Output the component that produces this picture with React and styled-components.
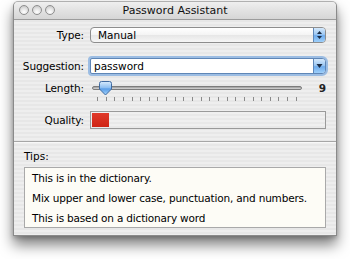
import React from "react";
import styled, { createGlobalStyle } from "styled-components";

const Global = createGlobalStyle`
  html, body { margin: 0; padding: 0; background: #ffffff; }
  body { font-family: "DejaVu Sans", "Liberation Sans", sans-serif; }
`;

const Page = styled.div`
  width: 350px;
  height: 259px;
  padding: 1px 0 0 13px;
  box-sizing: border-box;
  overflow: hidden;
`;

const Window = styled.div`
  width: 324px;
  height: 235px;
  box-sizing: border-box;
  border: 1px solid #8a8a8a;
  border-top-color: #b0b0b0;
  border-radius: 5px 5px 0 0;
  box-shadow: 0 9px 14px rgba(0, 0, 0, 0.5), 0 2px 4px rgba(0, 0, 0, 0.2);
  background: repeating-linear-gradient(
    to bottom,
    #eeeeee 0px,
    #eeeeee 2px,
    #e7e7e7 2px,
    #e7e7e7 4px
  );
  display: flex;
  flex-direction: column;
  overflow: hidden;
`;

const TitleBar = styled.div`
  height: 17px;
  flex: none;
  position: relative;
  display: flex;
  align-items: center;
  justify-content: center;
  background: linear-gradient(to bottom, #efefef 0%, #e2e2e2 50%, #d6d6d6 100%);
  border-bottom: 1px solid #9c9c9c;
  border-radius: 4px 4px 0 0;
`;

const Lights = styled.div`
  position: absolute;
  left: 5px;
  top: 3px;
  display: flex;
  gap: 3px;
`;

const Light = styled.span`
  width: 10px;
  height: 10px;
  border-radius: 50%;
  box-sizing: border-box;
  border: 1px solid #8e8e8e;
  background: radial-gradient(circle at 50% 75%, #ffffff 0%, #e6e6e6 45%, #bdbdbd 100%);
`;

const Title = styled.span`
  font-size: 11px;
  color: #111;
`;

const Form = styled.div`
  display: flex;
  flex-direction: column;
  padding: 0 10px 0 0;
`;

const Row = styled.div`
  display: flex;
  align-items: ${(p) => (p.$top ? "flex-start" : "center")};
  margin-top: ${(p) => p.$mt}px;
  height: ${(p) => p.$h}px;
`;

const Label = styled.span`
  width: 70px;
  flex: none;
  text-align: right;
  margin-right: 6px;
  font-size: 10.5px;
  letter-spacing: -0.1px;
  line-height: 16px;
  color: #000;
`;

const PopUp = styled.div`
  flex: 1;
  height: 16px;
  box-sizing: border-box;
  border: 1px solid #8d8d8d;
  border-radius: 4px;
  background: linear-gradient(to bottom, #ffffff 0%, #f4f4f4 50%, #e6e6e6 51%, #f6f6f6 100%);
  display: flex;
  align-items: center;
  overflow: hidden;
`;

const FieldText = styled.span`
  flex: 1;
  font-size: 10.5px;
  color: #000;
  padding-left: ${(p) => p.$pl}px;
  line-height: 14px;
`;

const AquaButton = styled.div`
  width: 11px;
  align-self: stretch;
  flex: none;
  background: linear-gradient(
    to bottom,
    #d4e8fb 0%,
    #9fc9f3 45%,
    #6eabec 55%,
    #9ed0fb 100%
  );
  border-left: 1px solid #5f87b8;
  display: flex;
  align-items: center;
  justify-content: center;
`;

const Combo = styled.div`
  flex: 1;
  height: 16px;
  box-sizing: border-box;
  border: 1px solid #5f86b6;
  border-radius: 2px 4px 4px 2px;
  background: #ffffff;
  box-shadow: 0 0 0 2px #9cbde3;
  display: flex;
  align-items: center;
  overflow: hidden;
`;

const SliderWrap = styled.div`
  flex: 1;
  display: flex;
  align-items: flex-start;
`;

const Slider = styled.div`
  width: 214px;
  height: 24px;
  position: relative;
`;

const Track = styled.div`
  position: absolute;
  left: 2px;
  right: 2px;
  top: 6px;
  height: 4px;
  box-sizing: border-box;
  border-radius: 2px;
  border: 1px solid #7c7c7c;
  background: linear-gradient(to bottom, #9a9a9a, #d9d9d9);
`;

const Ticks = styled.div`
  position: absolute;
  left: 7px;
  right: 7px;
  top: 17px;
  display: flex;
  justify-content: space-between;
`;

const Tick = styled.span`
  width: 1px;
  height: 4px;
  background: #8a8a8a;
`;

const Thumb = styled.svg`
  position: absolute;
  top: 1px;
  width: 13px;
  height: 15px;
`;

const Value = styled.span`
  flex: 1;
  text-align: right;
  font-size: 10.5px;
  font-weight: bold;
  line-height: 16px;
  color: #222;
`;

const Meter = styled.div`
  flex: 1;
  height: 18px;
  box-sizing: border-box;
  border: 1px solid #9a9a9a;
  background: repeating-linear-gradient(
    to bottom,
    #f0f0f0 0px,
    #f0f0f0 2px,
    #e9e9e9 2px,
    #e9e9e9 4px
  );
  padding: 1px;
  display: flex;
`;

const MeterFill = styled.div`
  height: 100%;
  background: linear-gradient(to bottom, #e03a2a, #cf2414);
`;

const Separator = styled.div`
  margin-top: 12px;
  height: 1px;
  background: #a6a6a6;
  border-bottom: 1px solid #f8f8f8;
`;

const Tips = styled.div`
  padding: 6px 10px 0 10px;
  display: flex;
  flex-direction: column;
`;

const TipsLabel = styled.span`
  font-size: 10.5px;
  line-height: 14px;
  color: #000;
`;

const TipsBox = styled.div`
  margin-top: 4px;
  height: 61px;
  box-sizing: border-box;
  border: 1px solid #a9a9a9;
  background: #fdfcf6;
  padding: 0px 7px;
  display: flex;
  flex-direction: column;
`;

const TipLine = styled.span`
  font-size: 10.5px;
  letter-spacing: -0.18px;
  line-height: 20px;
  color: #000;
  white-space: nowrap;
`;

const UpDown = () => (
  <svg width="7" height="10" viewBox="0 0 7 10">
    <path d="M3.5 1 L6 4 L1 4 Z" fill="#1b2c45" />
    <path d="M3.5 9 L6 6 L1 6 Z" fill="#1b2c45" />
  </svg>
);

const Down = () => (
  <svg width="7" height="6" viewBox="0 0 7 6">
    <path d="M0.5 1 L6.5 1 L3.5 5 Z" fill="#1b2c45" />
  </svg>
);

const min = 8;
const max = 31;
const value = 9;

export default function App() {
  const ticks = Array.from({ length: max - min + 1 });
  const thumbLeft = 7 + ((value - min) / (max - min)) * 200 - 6.5;
  return (
    <>
      <Global />
      <Page>
        <Window>
          <TitleBar>
            <Lights>
              <Light />
              <Light />
              <Light />
            </Lights>
            <Title>Password Assistant</Title>
          </TitleBar>
          <Form>
            <Row $mt={7} $h={16}>
              <Label>Type:</Label>
              <PopUp>
                <FieldText $pl={7}>Manual</FieldText>
                <AquaButton>
                  <UpDown />
                </AquaButton>
              </PopUp>
            </Row>
            <Row $mt={15} $h={16}>
              <Label>Suggestion:</Label>
              <Combo>
                <FieldText $pl={3}>password</FieldText>
                <AquaButton>
                  <Down />
                </AquaButton>
              </Combo>
            </Row>
            <Row $mt={6} $h={24} $top>
              <Label>Length:</Label>
              <SliderWrap>
                <Slider>
                  <Track />
                  <Ticks>
                    {ticks.map((_, i) => (
                      <Tick key={i} />
                    ))}
                  </Ticks>
                  <Thumb viewBox="0 0 13 15" style={{ left: thumbLeft }}>
                    <defs>
                      <linearGradient id="tg" x1="0" y1="0" x2="0" y2="1">
                        <stop offset="0" stopColor="#d9ecfd" />
                        <stop offset="0.45" stopColor="#8fc0f2" />
                        <stop offset="0.55" stopColor="#5a9ee8" />
                        <stop offset="1" stopColor="#a6d4fb" />
                      </linearGradient>
                    </defs>
                    <path
                      d="M2.5 0.5 H10.5 Q12.5 0.5 12.5 2.5 V8 L6.5 14 L0.5 8 V2.5 Q0.5 0.5 2.5 0.5 Z"
                      fill="url(#tg)"
                      stroke="#3f6aa0"
                      strokeWidth="1"
                    />
                  </Thumb>
                </Slider>
                <Value>9</Value>
              </SliderWrap>
            </Row>
            <Row $mt={7} $h={18}>
              <Label>Quality:</Label>
              <Meter>
                <MeterFill style={{ width: 17 }} />
              </Meter>
            </Row>
          </Form>
          <Separator />
          <Tips>
            <TipsLabel>Tips:</TipsLabel>
            <TipsBox>
              <TipLine>This is in the dictionary.</TipLine>
              <TipLine>Mix upper and lower case, punctuation, and numbers.</TipLine>
              <TipLine>This is based on a dictionary word</TipLine>
            </TipsBox>
          </Tips>
        </Window>
      </Page>
    </>
  );
}
